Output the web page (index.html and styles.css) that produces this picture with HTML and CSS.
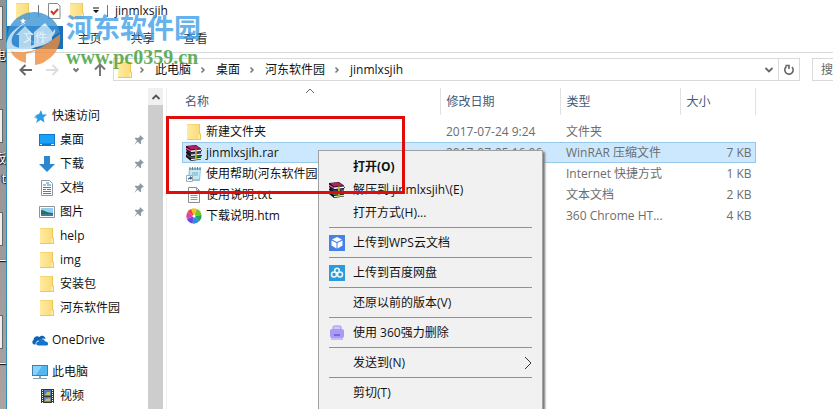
FILE: index.html
```html
<!DOCTYPE html>
<html lang="zh-CN">

<head>
    <meta charset="utf-8" />
    <meta name="viewport" content="width=device-width, initial-scale=1" />
    <title>jinmlxsjih</title>
    <link rel="stylesheet" href="styles.css">
</head>

<body>
    <!-- shared icons -->
    <svg class="defs" width="0" height="0">
        <linearGradient id="paper" x2="1">
            <stop offset="0" stop-color="#ffeaa0" />
            <stop offset="1" stop-color="#fbdc7c" />
        </linearGradient>
        <symbol id="folder" viewBox="0 0 16 16">
            <path d="M1 0h13v9l1 1v6H1z" fill="#ecc95c" />
            <path d="M1 .5h12V15H1z" fill="url(#paper)" />
            <path d="M12.500 10.500h1.500V15h-1.500z" fill="#fff0b8" />
        </symbol>
        <symbol id="rar" viewBox="0 0 16 16">
            <path d="M0 1l10-1 5 3.500v1l1 1-1 1v3l1 1-1 1v3l-10 1.500-5-4v-2l1-1-1-1V7l1-1-1-1z" fill="#1c1018" />
            <path d="M1 1.300l9-.8L14.500 3.500 5 4.500z" fill="#b02264" />
            <path d="M5 5.500l10-1V6L5 7z" fill="#fff" />
            <path d="M0 2.500l5 3v1.200L0 4z" fill="#e65ba9" />
            <path d="M1 6.300l4 2.400 10-1V7L5 8z" fill="#3b50c8" />
            <path d="M5 9.500l10-1V10L5 11z" fill="#e8ecff" />
            <path d="M1 10.500l4 2.500 10-1v-1L5 12 1 9.500z" fill="#229b52" />
            <path d="M5 14l10-1.200V14L5 15.200z" fill="#d8f4d8" />
            <path d="M9 4.500l1.800-.2V15l-1.800.2z" fill="#c9a92c" />
        </symbol>
        <symbol id="pin" viewBox="0 0 12 12">
            <path d="M7 1l4 4-1.500.3L8 7l.2 2.500-1 .8-2.400-2.500L1 11l3-4.200L1.700 4.500l.9-.9L5 4l1.800-1.600z" fill="#8d99a5" />
        </symbol>
        <symbol id="chevron" viewBox="0 0 8 8">
            <path d="M2.500 1.500L5 4 2.500 6.500" fill="none" stroke="#777" stroke-width="1.500" />
        </symbol>
        <symbol id="down" viewBox="0 0 10 10">
            <path d="M1.500 3L5 6.500 8.500 3" fill="none" stroke="#666" stroke-width="1.800" />
        </symbol>
    </svg>

    <div class="desktop">
        <div class="shortcut"><i></i><span>电</span></div>
        <div class="shortcut"><i></i><span>板</span><span>t</span></div>
        <div class="shortcut"><i></i><span>一</span></div>
        <div class="shortcut"><i></i><span>一</span></div>
    </div>

    <div class="window">
        <header class="titlebar">
            <svg class="icon"><use href="#folder" /></svg>
            <span class="divider"></span>
            <svg class="icon" viewBox="0 0 16 16">
                <path d="M2.500.5h9l2.500 2.500v12.500H2.500z" fill="#fff" stroke="#8a8a8a" />
                <path d="M5 8l2.500 3L12 6" fill="none" stroke="#d2392b" stroke-width="2" />
            </svg>
            <svg class="icon"><use href="#folder" /></svg>
            <svg class="more" viewBox="0 0 8 8">
                <path d="M1 .5h6v1H1zM1 3h6L4 6z" fill="#111" />
            </svg>
            <span class="divider"></span>
            <h1>jinmlxsjih</h1>
        </header>

        <nav class="tabs">
            <button class="tab file">文件</button>
            <button class="tab">主页</button>
            <button class="tab">共享</button>
            <button class="tab">查看</button>
        </nav>

        <div class="toolbar">
            <div class="history">
                <button aria-label="后退"><svg viewBox="0 0 14 14"><path d="M13 7H2M6.500 2L1.500 7l5 5" stroke="#666" /></svg></button>
                <button aria-label="前进"><svg viewBox="0 0 14 14"><path d="M1 7h11M7.500 2l5 5-5 5" stroke="#ddd" /></svg></button>
                <button class="small" aria-label="最近"><svg viewBox="0 0 10 10"><path d="M2.500 3.500L5 6l2.500-2.500" stroke="#777" /></svg></button>
                <button aria-label="向上"><svg viewBox="0 0 14 14"><path d="M7 13V2M2 6.500l5-5 5 5" stroke="#777" /></svg></button>
            </div>
            <div class="address">
                <svg class="icon"><use href="#folder" /></svg>
                <svg class="chevron"><use href="#chevron" /></svg>
                <a href="#">此电脑</a>
                <svg class="chevron"><use href="#chevron" /></svg>
                <a href="#">桌面</a>
                <svg class="chevron"><use href="#chevron" /></svg>
                <a href="#">河东软件园</a>
                <svg class="chevron"><use href="#chevron" /></svg>
                <a href="#">jinmlxsjih</a>
                <button class="drop" aria-label="展开"><svg><use href="#down" /></svg></button>
                <button class="refresh" aria-label="刷新">
                    <svg viewBox="0 0 12 12"><path d="M3.500 2.500a4.200 4.200 0 1 0 5.500.5M2.500 1.500h3.500v3.500" fill="none" stroke="#666" stroke-width="1.600" /></svg>
                </button>
            </div>
            <input class="search" type="text" aria-label="搜索" placeholder="搜">
        </div>

        <main class="content">
            <nav class="sidebar">
                <div class="tree">
                    <a class="root" href="#">
                        <svg class="icon" viewBox="0 0 16 16"><path d="M9 2l1.500 4.500H15l-3.500 3 1 5L8.500 12l-4.500 3 1.500-4.500H3l2-1H1.500L5 7.500H2.500L7 6z" fill="#2f9be0" /></svg>
                        快速访问
                    </a>
                    <a href="#">
                        <svg class="icon" viewBox="0 0 16 16"><path d="M0 2h16v12H0z" fill="#0f78c8" /><path d="M1 3h14v8.500H1z" fill="#1ba1f8" /><path d="M1 12h2v1H1zM12 12h3v1h-3z" fill="#d9f1ff" /></svg>
                        桌面<svg class="pin"><use href="#pin" /></svg>
                    </a>
                    <a href="#">
                        <svg class="icon" viewBox="0 0 16 16"><path d="M5 0h6v8h5l-8 8-8-8h5z" fill="#2d86d0" /></svg>
                        下载<svg class="pin"><use href="#pin" /></svg>
                    </a>
                    <a href="#">
                        <svg class="icon" viewBox="0 0 16 16"><path d="M2.500.5h8l3 3v12h-11z" fill="#fff" stroke="#8b98a3" /><path d="M7 3h3M4 5h3M8 5h4M4 7.500h8M4 9.500h3M8 9.500h4M4 11.500h8M4 13.500h8" stroke="#3687bd" /></svg>
                        文档<svg class="pin"><use href="#pin" /></svg>
                    </a>
                    <a href="#">
                        <svg class="icon" viewBox="0 0 16 16"><path d="M.5 2.500h15v11H.5z" fill="#fff" stroke="#8b959b" /><path d="M2 4h12v8H2z" fill="#8fd0f2" /><path d="M2 6c4 0 5 3 12 3v1H2z" fill="#2e6e58" /><path d="M2 10h12v2H2z" fill="#3c77a8" /></svg>
                        图片<svg class="pin"><use href="#pin" /></svg>
                    </a>
                    <a href="#"><svg class="icon"><use href="#folder" /></svg>help</a>
                    <a href="#"><svg class="icon"><use href="#folder" /></svg>img</a>
                    <a href="#"><svg class="icon"><use href="#folder" /></svg>安装包</a>
                    <a href="#"><svg class="icon"><use href="#folder" /></svg>河东软件园</a>
                    <a class="root spaced" href="#">
                        <svg class="icon" viewBox="0 0 16 16"><path d="M3.500 12.500H2A2.500 2.500 0 0 1 1.500 8C1.500 5 5 3 7.500 5c2-2.500 6-1 6 2-3-1.500-5 0-5.500 1.500-3-.5-4.500 1.500-4.500 4z" fill="#0e62b5" /><path d="M6.500 13.500c-3 0-3-4 0-4C7 6.500 12 6 13 9.500c4 0 4 4 1 4z" fill="#1673cc" /></svg>
                        OneDrive
                    </a>
                    <a class="root spaced" href="#">
                        <svg class="icon" viewBox="0 0 16 16"><path d="M0 1h16v11H0z" fill="#437fa6" /><path d="M1 2h14v9H1z" fill="#53b8f2" /><path d="M1 2h9l-6 9H1z" fill="#86d3fb" /><path d="M7 12h2v2H7zM1 14h14v1H1z" fill="#8ba4b3" /></svg>
                        此电脑
                    </a>
                    <a href="#">
                        <svg class="icon" viewBox="0 0 16 16"><path d="M2 1h13v14H2z" fill="#33353b" /><path d="M5 2h7v6H5z" fill="#477fc0" /><path d="M5 9h7v5H5z" fill="#5b86b0" /><path d="M8 4h3v3H6zM7 11l4-1v3H6z" fill="#d6bd42" /><path d="M3.500 2v13M13.500 2v13" stroke="#fff" stroke-dasharray="1 1" /></svg>
                        视频
                    </a>
                </div>
                <div class="scrollbar">
                    <svg viewBox="0 0 10 10"><path d="M1.500 7L5 3.500 8.500 7" fill="none" stroke="#555" stroke-width="1.800" /></svg>
                </div>
            </nav>

            <section class="files">
                <table>
                    <thead>
                        <tr>
                            <th class="name">
                                名称
                                <svg class="sort" viewBox="0 0 10 6"><path d="M1 5l4-4 4 4" fill="none" stroke="#666" /></svg>
                            </th>
                            <th class="date">修改日期</th>
                            <th class="type">类型</th>
                            <th class="size">大小</th>
                        </tr>
                    </thead>
                    <tbody>
                        <tr>
                            <td><svg class="icon"><use href="#folder" /></svg>新建文件夹</td>
                            <td>2017-07-24 9:24</td>
                            <td>文件夹</td>
                            <td></td>
                        </tr>
                        <tr class="selected">
                            <td><svg class="icon"><use href="#rar" /></svg>jinmlxsjih.rar</td>
                            <td>2017-07-25 16:06</td>
                            <td>WinRAR 压缩文件</td>
                            <td>7 KB</td>
                        </tr>
                        <tr>
                            <td>
                                <svg class="icon" viewBox="0 0 16 16"><path d="M3 2h12l-1 13H2z" fill="#8fc8dc" /><path d="M4 4h10l-1 9H4z" fill="#c7e8f2" /><path d="M4 1v3M6.500 1v3M9 1v3M11.500 1v3M14 1v3" stroke="#667e88" /><path d="M6 7h6M6 9h6" stroke="#6fb1c8" /><path d="M.5 9.500h6v6h-6z" fill="#fff" stroke="#aaa" /><path d="M2 14c0-2 .5-2.500 2-2.500V10L6.500 12 4.500 14v-1.200C3.500 12.800 3 13 2 14z" fill="#1b5ba8" /></svg>使用帮助(河东软件园
                            </td>
                            <td></td>
                            <td>Internet 快捷方式</td>
                            <td>1 KB</td>
                        </tr>
                        <tr>
                            <td>
                                <svg class="icon" viewBox="0 0 16 16"><path d="M2.500.5h8l3 3v12h-11z" fill="#fff" stroke="#8c8c8c" /><path d="M10.500.5v3h3M4.500 4.500H9M4.500 6.500h7M4.500 8.500h7M4.500 10.500h7M4.500 12.500h7" fill="none" stroke="#999" /></svg>使用说明.txt
                            </td>
                            <td>2017-07-24 10:38</td>
                            <td>文本文档</td>
                            <td>2 KB</td>
                        </tr>
                        <tr>
                            <td>
                                <svg class="icon" viewBox="0 0 16 16">
                                    <path d="M8 8L5 1a7.500 7.500 0 0 1 6 0z" fill="#f6c31c" />
                                    <path d="M8 8l3-7a7.500 7.500 0 0 1 4.500 6z" fill="#74c72e" />
                                    <path d="M8 8l7.500-1a7.500 7.500 0 0 1-2.500 6.500z" fill="#20a56a" />
                                    <path d="M8 8l5 5.500a7.500 7.500 0 0 1-6.500 2z" fill="#278ee0" />
                                    <path d="M8 8l-1.500 7.500A7.500 7.500 0 0 1 1 11z" fill="#6749db" />
                                    <path d="M8 8l-7 3a7.500 7.500 0 0 1 .5-7z" fill="#e23fb4" />
                                    <path d="M8 8L1.500 4A7.500 7.500 0 0 1 5 1z" fill="#f0462e" />
                                    <circle cx="8" cy="8" r="1.500" fill="#fff" />
                                </svg>下载说明.htm
                            </td>
                            <td>2017-07-24 10:37</td>
                            <td>360 Chrome HT...</td>
                            <td>4 KB</td>
                        </tr>
                    </tbody>
                </table>
            </section>
        </main>
    </div>

    <div class="menu">
        <button class="default">打开(O)</button>
        <button><svg class="icon"><use href="#rar" /></svg>解压到 jinmlxsjih\(E)</button>
        <button>打开方式(H)...</button>
        <hr>
        <button>
            <svg class="icon" viewBox="0 0 16 16"><path d="M0 0h16v16H0z" fill="#4681e8" /><path d="M8 2l5 2.500L8 7 3 4.500zM2.500 5.500L7.500 8v5.500l-5-3zM13.500 5.500L8.500 8v5.500l5-3z" fill="#fff" /></svg>上传到WPS云文档
        </button>
        <hr>
        <button>
            <svg class="icon" viewBox="0 0 16 16"><path d="M0 0h16v16H0z" fill="#2e9ad7" /><g fill="none" stroke="#e8f8ff" stroke-width="1.500"><circle cx="8" cy="5.500" r="2.300" /><circle cx="5" cy="9.500" r="2.500" /><circle cx="11" cy="9.500" r="2.500" /></g></svg>上传到百度网盘
        </button>
        <hr>
        <button>还原以前的版本(V)</button>
        <hr>
        <button>
            <svg class="icon" viewBox="0 0 16 16"><path d="M4 5V2q0-1 1-1h6q1 0 1 1v3" fill="#cfc5ff" stroke="#a395ec" /><rect x="1" y="4" width="14" height="9" rx="2" fill="#a99bf3" /><path d="M2 13h12v2H2z" fill="#c6bcfa" /><path d="M5 9h6v2H5z" fill="#7a6ad6" /></svg>使用 360强力删除
        </button>
        <hr>
        <button>发送到(N)<svg class="arrow" viewBox="0 0 8 14"><path d="M1 1l6 6-6 6" fill="none" stroke="#333" /></svg></button>
        <hr>
        <button>剪切(T)</button>
    </div>

    <div class="highlight"></div>

    <div class="watermark">
        <svg viewBox="0 0 56 56">
            <path d="M1 27A27 27 0 0 1 54 22L32 36 4 38z" fill="#3c94d6" />
            <path d="M4 40q22 8 46-13l4-3a27 27 0 0 1-13 26q-4 4-12 5V41l-9 3v9Q8 50 4 40z" fill="#f08c3a" />
            <path d="M13 39V25h-3l9-9 9 9h-3v13zM28 37V22l11-9 7 8v9q-8 7-18 7z" fill="#d8effc" />
            <path d="M1 40C-2 25 12 16 20 13 8 20 3 30 7 35c8 8 32-3 42-16 4 10-33 29-48 21z" fill="#e9f6ff" />
            <path d="M17 8l1 2h2l-2 2 1 2-2-1-2 1 1-2-2-2h2z" fill="#fff" />
        </svg>
        <div>
            <strong>河东软件园</strong>
            <em>www.pc0359.cn</em>
        </div>
    </div>
</body>

</html>
```

FILE: styles.css
```css
* {
    box-sizing: border-box;
}

body {
    display: flex;
    height: 100vh;
    margin: 0;
    overflow: hidden;
    background: #fff;
    color: #111;
    font-family: "Open Sans", "Noto Sans CJK SC", sans-serif;
    font-size: 12px;
    line-height: 20px;
}

button {
    padding: 0;
    border: 0;
    background: none;
    color: inherit;
    font: inherit;
}

a {
    color: inherit;
    text-decoration: none;
}

.defs {
    position: absolute;
}

.icon {
    flex: none;
    width: 16px;
    height: 16px;
}

/* strip of desktop left of the window */
.desktop {
    flex: none;
    width: 6px;
    padding-top: 6px;
    overflow: hidden;
    background: linear-gradient(#929292, #9c9899 50%, #aaa3a0);
}

.shortcut {
    display: flex;
    flex-direction: column;
    align-items: flex-end;
    height: 103px;
    color: #fff;
    text-shadow: 1px 1px 1px #000, -1px 0 1px #000;
}

.shortcut i {
    width: 3px;
    height: 34px;
    margin-right: 3px;
    margin-bottom: 6px;
    border: 1px solid #666;
    border-left: 0;
    background: #eee;
}

.window {
    display: flex;
    flex: 1;
    flex-direction: column;
    min-width: 0;
    border-left: 1px solid #2a8fc0;
}

.titlebar {
    display: flex;
    align-items: center;
    gap: 7px;
    height: 26px;
    padding: 0 8px 4px;
}

.titlebar h1 {
    margin: 0;
    font-size: 12px;
    font-weight: normal;
}

.divider {
    width: 1px;
    height: 12px;
    background: #777;
}

.more {
    width: 8px;
    height: 8px;
}

.tabs {
    display: flex;
    height: 27px;
    border-bottom: 1px solid #dadbdc;
}

.tab {
    width: 53px;
    height: 25px;
    color: #333;
}

.tab.file {
    width: 56px;
    height: 23px;
    background: #1a6fb8;
    color: #fff;
}

.toolbar {
    display: flex;
    align-items: center;
    height: 33px;
}

.history {
    display: flex;
    align-items: center;
    justify-content: space-between;
    width: 106px;
    padding: 0 6px 0 12px;
}

.history button {
    display: flex;
}

.history svg {
    width: 14px;
    height: 14px;
    fill: none;
    stroke-width: 2;
}

.history .small svg {
    width: 10px;
    height: 10px;
}

.address {
    display: flex;
    flex: 1;
    align-items: center;
    height: 23px;
    padding-left: 3px;
    border: 1px solid #d9d9d9;
}

.address a {
    margin-right: 8px;
    margin-left: 9px;
}

.chevron {
    width: 8px;
    height: 8px;
}

.address .icon + .chevron {
    margin-left: 5px;
}

.address .drop {
    display: flex;
    align-items: center;
    justify-content: center;
    width: 18px;
    height: 21px;
    margin-left: auto;
}

.address .drop svg {
    width: 10px;
    height: 10px;
}

.address .refresh {
    display: flex;
    align-items: center;
    justify-content: center;
    width: 21px;
    height: 21px;
    border-left: 1px solid #d9d9d9;
}

.address .refresh svg {
    width: 12px;
    height: 12px;
}

.search {
    width: 21px;
    height: 23px;
    margin-left: 12px;
    padding: 0 0 0 8px;
    border: 1px solid #d9d9d9;
    border-right: 0;
    border-radius: 0;
    font: inherit;
}

.search::placeholder {
    color: #666;
}

.content {
    display: flex;
    flex: 1;
    min-height: 0;
    padding-top: 2px;
}

.sidebar {
    display: flex;
    flex: none;
    width: 160px;
    border-right: 1px solid #f0f0f0;
}

.tree {
    flex: 1;
    padding-top: 16px;
    overflow: hidden;
}

.tree a {
    display: flex;
    align-items: center;
    gap: 5px;
    height: 24px;
    padding-left: 32px;
    padding-right: 3px;
}

.tree a.root {
    gap: 4px;
    padding-left: 25px;
}

.tree a.spaced {
    margin-top: 8px;
}

.pin {
    width: 12px;
    height: 12px;
    margin-left: auto;
}

.scrollbar {
    display: flex;
    justify-content: center;
    width: 15px;
    margin-right: 3px;
    background: linear-gradient(#f0f0f0 17px, #cdcdcd 17px);
}

.scrollbar svg {
    width: 10px;
    height: 10px;
    margin-top: 4px;
}

.files {
    flex: 1;
    padding-left: 15px;
}

table {
    width: 574px;
    border-collapse: collapse;
    table-layout: fixed;
}

th {
    position: relative;
    height: 27px;
    padding: 0 6px;
    border-right: 1px solid #e2e2e2;
    color: #44597a;
    font-weight: normal;
    text-align: left;
}

th.name {
    width: 258px;
    padding-left: 3px;
}

th.date,
th.type {
    width: 120px;
}

.sort {
    position: absolute;
    top: 0;
    left: 50%;
    width: 10px;
    height: 6px;
    margin-left: -6px;
}

tbody::before {
    display: block;
    height: 6px;
    content: "";
}

td {
    height: 21px;
    padding: 0 6px;
    color: #6d6d6d;
    white-space: nowrap;
}

td:first-child {
    padding-left: 4px;
    color: #111;
}

td:last-child {
    padding-right: 4px;
    text-align: right;
}

td .icon {
    margin-right: 4px;
    vertical-align: middle;
}

.selected {
    background: #cce8ff;
    outline: 1px solid #99c9ea;
    outline-offset: -1px;
}

/* context menu */
.menu {
    position: absolute;
    top: 150px;
    bottom: -8px;
    left: 318px;
    width: 225px;
    padding-top: 4px;
    border: 1px solid #a0a0a0;
    background: #f1f1f1;
    box-shadow: 2px 2px 2px #777;
}

.menu button {
    display: flex;
    align-items: center;
    width: 100%;
    height: 23px;
    padding-left: 34px;
    padding-right: 10px;
}

.menu .default {
    font-weight: bold;
}

.menu hr {
    height: 1px;
    margin: 3px 10px;
    border: 0;
    background: #919191;
}

.menu .icon {
    margin-left: -24px;
    margin-right: 8px;
}

.menu .arrow {
    width: 8px;
    height: 14px;
    margin-left: auto;
}

.highlight {
    position: absolute;
    top: 116px;
    left: 166px;
    width: 239px;
    height: 78px;
    border: 3px solid #e00b0b;
}

.watermark {
    position: absolute;
    top: 10px;
    left: 6px;
    display: flex;
    gap: 4px;
    opacity: 0.8;
    pointer-events: none;
}

.watermark svg {
    width: 56px;
    height: 56px;
}

.watermark strong {
    display: block;
    height: 36px;
    color: #3f9fe8;
    font-size: 27px;
    line-height: 36px;
}

.watermark em {
    display: block;
    color: #3d9c35;
    font: bold 20px/22px "Liberation Serif", serif;
}
```
